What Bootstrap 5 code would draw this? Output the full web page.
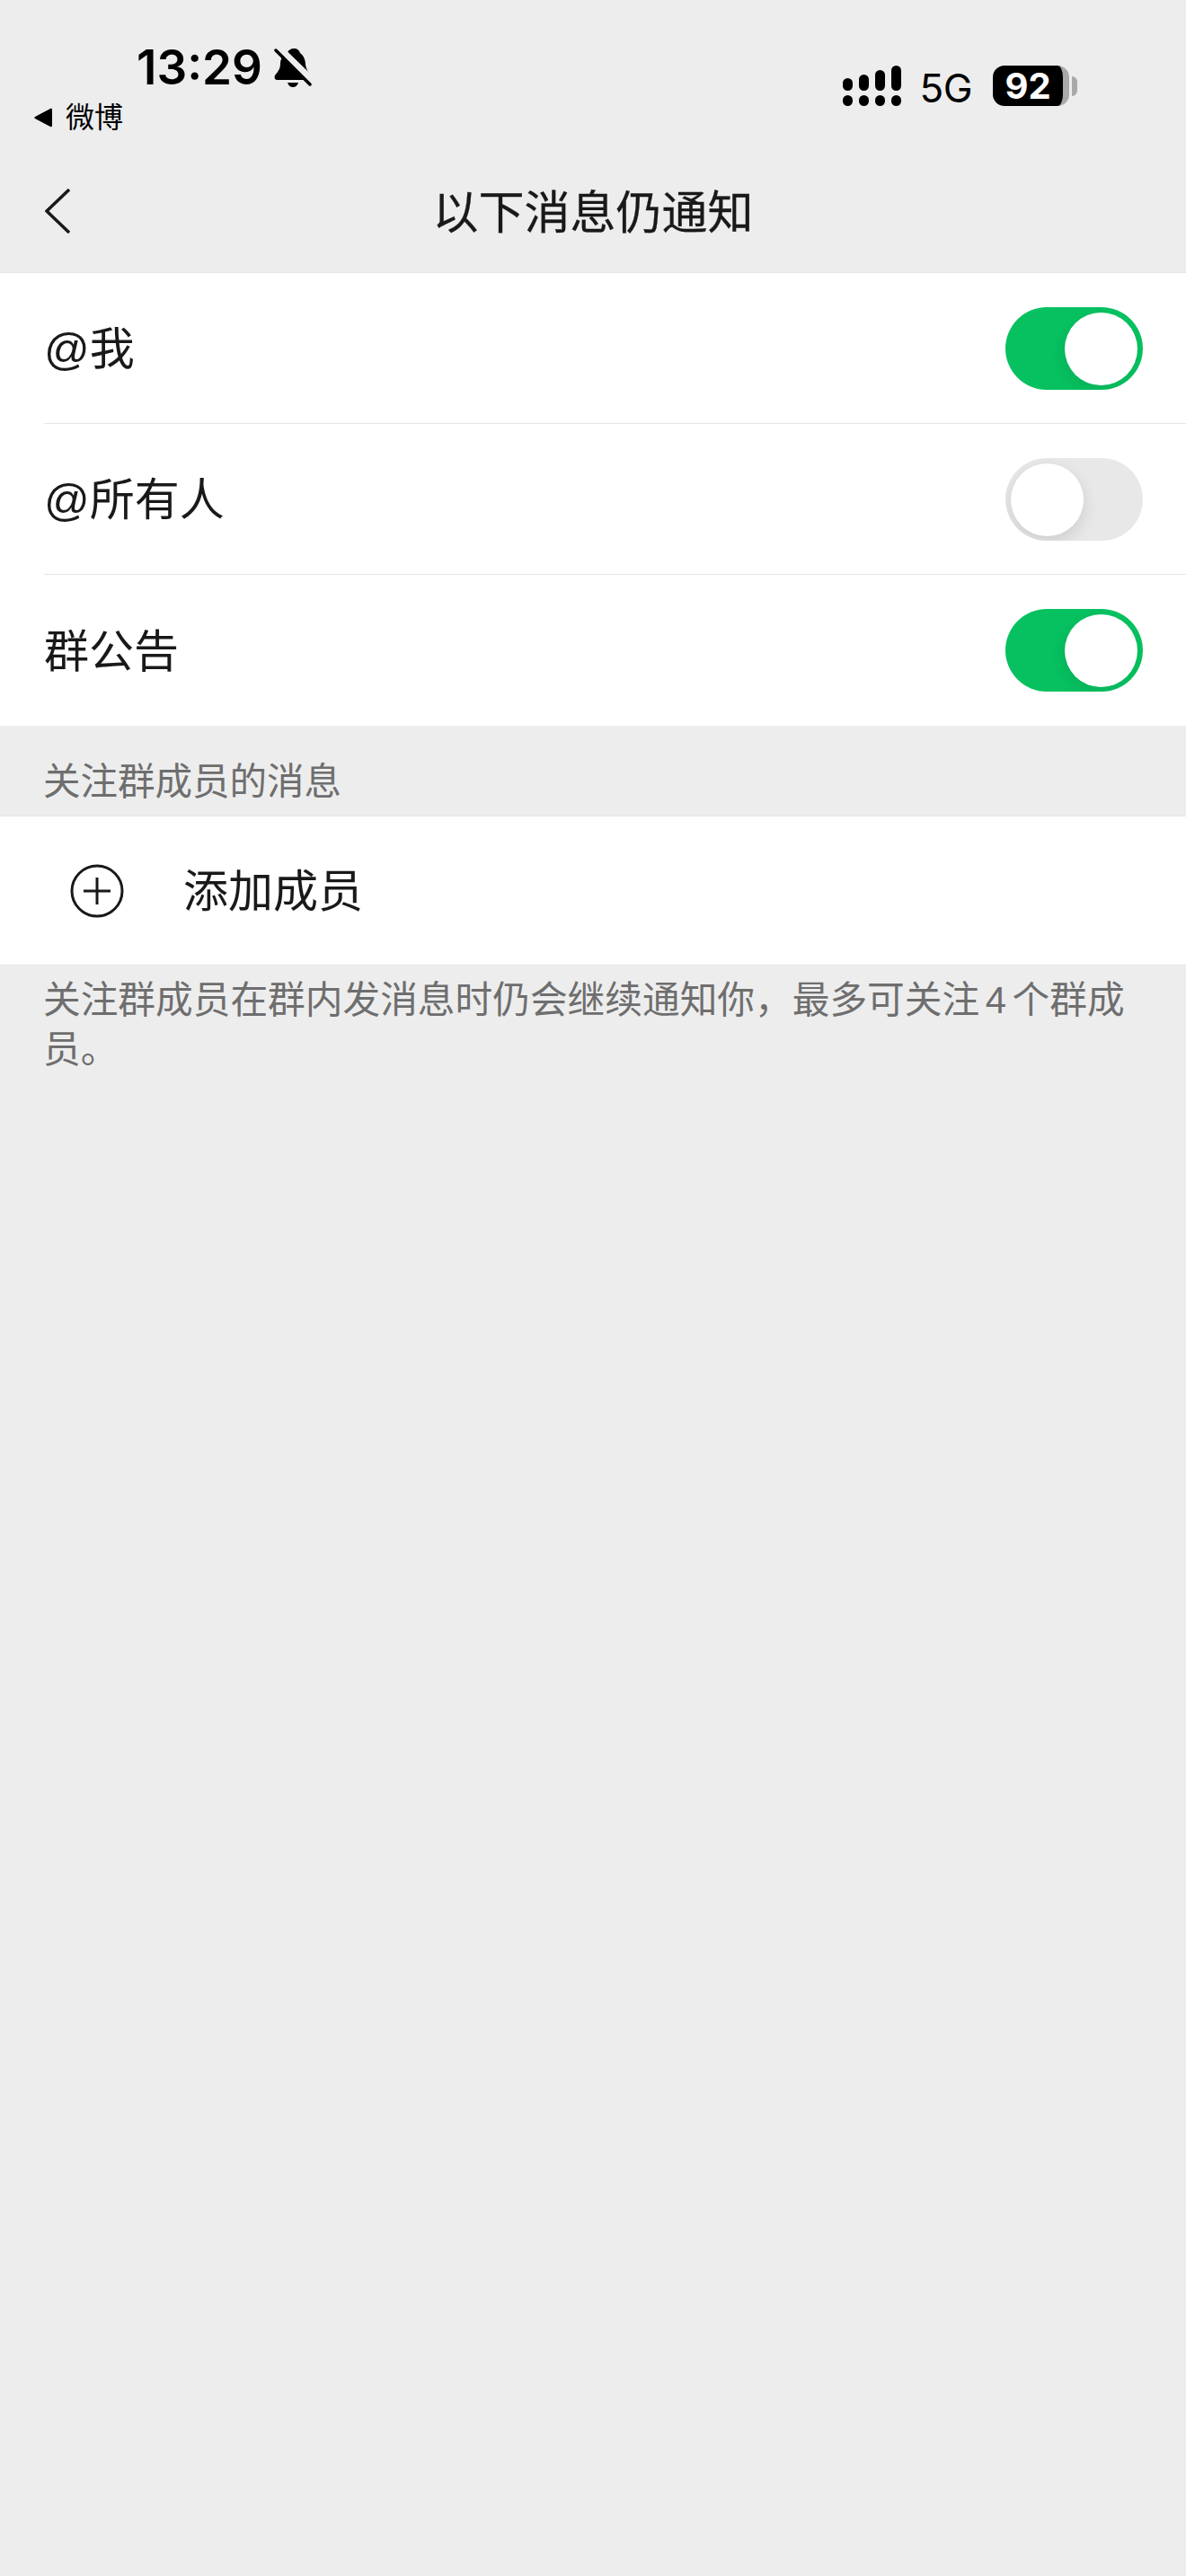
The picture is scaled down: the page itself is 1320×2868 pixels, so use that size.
<!DOCTYPE html>
<html lang="zh-CN">
<head>
    <meta charset="UTF-8">
    <meta name="viewport" content="width=device-width, initial-scale=1">
    <title>以下消息仍通知</title>
    <link href="https://cdn.jsdelivr.net/npm/bootstrap@5.3.0/dist/css/bootstrap.min.css" rel="stylesheet">
    <style>
        body {
            background: #ededed;
            color: #191919;
            font-family: "Liberation Sans", "Noto Sans CJK SC", sans-serif;
            min-height: 100vh;
        }

        /* status bar */
        .status-bar { height: 166px; padding: 47px 121px 0 38px; }
        .clock { font-family: Inter, sans-serif; font-size: 53px; font-weight: 600; line-height: 56px; color: #000; margin-left: 114px; gap: 13px; }
        .back-app { font-size: 32px; line-height: 40px; margin-top: 8px; color: #000; gap: 13px; }
        .back-tri { width: 22px; height: 22px; }
        .status-right { margin-top: 26px; gap: 23px; }
        .signal { margin-right: -3px; }
        .net-label { font-family: Inter, sans-serif; font-size: 44px; height: 45px; line-height: 51px; color: #000; letter-spacing: -.5px; }
        .battery-wrap { gap: 3px; }
        .battery { width: 85px; height: 45px; background: #000; color: #fff; border-right: 7px solid #a9a9a9; border-radius: 13px; font-family: Inter, sans-serif; font-size: 40px; font-weight: 700; line-height: 45px; }
        .battery-nub { width: 6px; height: 22px; background: #a9a9a9; border-radius: 0 11px 11px 0; }

        /* nav */
        .top-nav { height: 138px; padding-bottom: 4px; }
        .top-nav .side { flex: 1 1 0; padding-left: 50px; }
        .top-nav .side svg { margin-top: 3px; }
        .page-title { font-size: 51px; font-weight: 400; line-height: 60px; margin: 10px 0 0; -webkit-text-stroke: .3px #191919; }

        /* lists */
        .setting-list { background: #fff; border-radius: 0; border-top: 1px solid #e5e5e5; margin-top: -1px; }
        .setting-row { height: 168px; margin-left: 49px; padding: 0 48px 0 0; background: transparent; border-color: #e5e5e5; color: #191919; font-size: 50px; }
        .row-label { margin-top: 4px; }
        .group-title { height: 100px; padding: 33px 48px 0; font-size: 41.500px; line-height: 60px; color: #6e6e6e; }
        .group-note { padding: 11px 48px 0; font-size: 41.700px; line-height: 55px; color: #6e6e6e; word-spacing: -5px; }
        .add-row { height: 167px; padding-left: 78px; gap: 66px; font-size: 50px; background: #fff; border-top: 1px solid #e5e5e5; border-bottom: 1px solid #e5e5e5; }

        /* switches */
        .toggle-track { width: 153px; height: 92px; border-radius: 46px; overflow: hidden; padding: 6px; display: flex; }
        .toggle-track.on { background: #07c160; justify-content: flex-end; }
        .toggle-track.off { background: #e8e8e8; justify-content: flex-start; }
        .toggle-knob { width: 81px; height: 81px; border-radius: 50%; background: #fff; }
        .toggle-track.on .toggle-knob { box-shadow: -4px 6px 14px rgba(0, 0, 0, .07); }
        .toggle-track.off .toggle-knob { box-shadow: 0 6px 18px rgba(0, 0, 0, .12); }
    </style>
</head>
<body>

<div class="status-bar d-flex justify-content-between align-items-start">
    <div>
        <div class="clock d-flex align-items-center">
            <span>13:29</span>
            <svg width="42" height="44" viewBox="0 0 42 44">
                <path d="M22 1C26 1 28 3 29 6C33 9 35 14 35 19C36 25 39 28 40 31C41 34 39 36 37 36L4 36C1 36 0 34 1 31C4 27 7 24 7 18C7 12 11 7 15 5C16 3 19 1 22 1Z" fill="#000"/>
                <path d="M15 39H27C26 43 23 44 21 44C18 44 16 42 15 39Z" fill="#000"/>
                <path d="M3 -1L43 38" stroke="#ededed" stroke-width="9" fill="none"/>
                <path d="M2 3L40 41" stroke="#000" stroke-width="3.500" stroke-linecap="round" fill="none"/>
            </svg>
        </div>
        <div class="back-app d-flex align-items-center">
            <svg class="back-tri" viewBox="0 0 22 22"><path d="M20 2V20C20 21 19 21.500 18 21L1 12C0 11.500 0 10.500 1 10L18 1C19 .5 20 1 20 2Z" fill="#000"/></svg>
            <span>微博</span>
        </div>
    </div>
    <div class="status-right d-flex align-items-center">
        <svg class="signal" width="65" height="45" viewBox="0 0 65 45">
            <g fill="#000">
                <rect x="0" y="14" width="11" height="14" rx="5.500"/>
                <rect x="18" y="10" width="11" height="18" rx="5.500"/>
                <rect x="36" y="5" width="11" height="23" rx="5.500"/>
                <rect x="54" y="0" width="11" height="28" rx="5.500"/>
                <rect x="0" y="33" width="11" height="12" rx="5.500"/>
                <rect x="18" y="33" width="11" height="12" rx="5.500"/>
                <rect x="36" y="33" width="11" height="12" rx="5.500"/>
                <rect x="54" y="33" width="11" height="12" rx="5.500"/>
            </g>
        </svg>
        <span class="net-label">5G</span>
        <div class="battery-wrap d-flex align-items-center">
            <div class="battery text-center">92</div>
            <div class="battery-nub"></div>
        </div>
    </div>
</div>

<div class="top-nav d-flex align-items-center">
    <div class="side">
        <svg class="d-block" width="28" height="50" viewBox="0 0 28 50"><path d="M27 1L2 25L27 49" stroke="#191919" stroke-width="3.500" fill="none"/></svg>
    </div>
    <h1 class="page-title">以下消息仍通知</h1>
    <div class="side"></div>
</div>

<div class="list-group list-group-flush setting-list">
    <div class="list-group-item setting-row d-flex justify-content-between align-items-center">
        <span class="row-label">@我</span>
        <div class="toggle-track on"><div class="toggle-knob"></div></div>
    </div>
    <div class="list-group-item setting-row d-flex justify-content-between align-items-center">
        <span class="row-label">@所有人</span>
        <div class="toggle-track off"><div class="toggle-knob"></div></div>
    </div>
    <div class="list-group-item setting-row d-flex justify-content-between align-items-center">
        <span class="row-label">群公告</span>
        <div class="toggle-track on"><div class="toggle-knob"></div></div>
    </div>
</div>

<div class="group-title">关注群成员的消息</div>

<div class="add-row d-flex align-items-center">
    <svg width="60" height="60" viewBox="0 0 60 60">
        <circle cx="30" cy="30" r="28" stroke="#191919" stroke-width="3" fill="none"/>
        <path d="M15 30H45M30 15V45" stroke="#191919" stroke-width="3" fill="none"/>
    </svg>
    <span class="row-label">添加成员</span>
</div>

<div class="group-note">关注群成员在群内发消息时仍会继续通知你，最多可关注 4 个群成员。</div>

<script src="https://cdn.jsdelivr.net/npm/bootstrap@5.3.0/dist/js/bootstrap.bundle.min.js"></script>
</body>
</html>
